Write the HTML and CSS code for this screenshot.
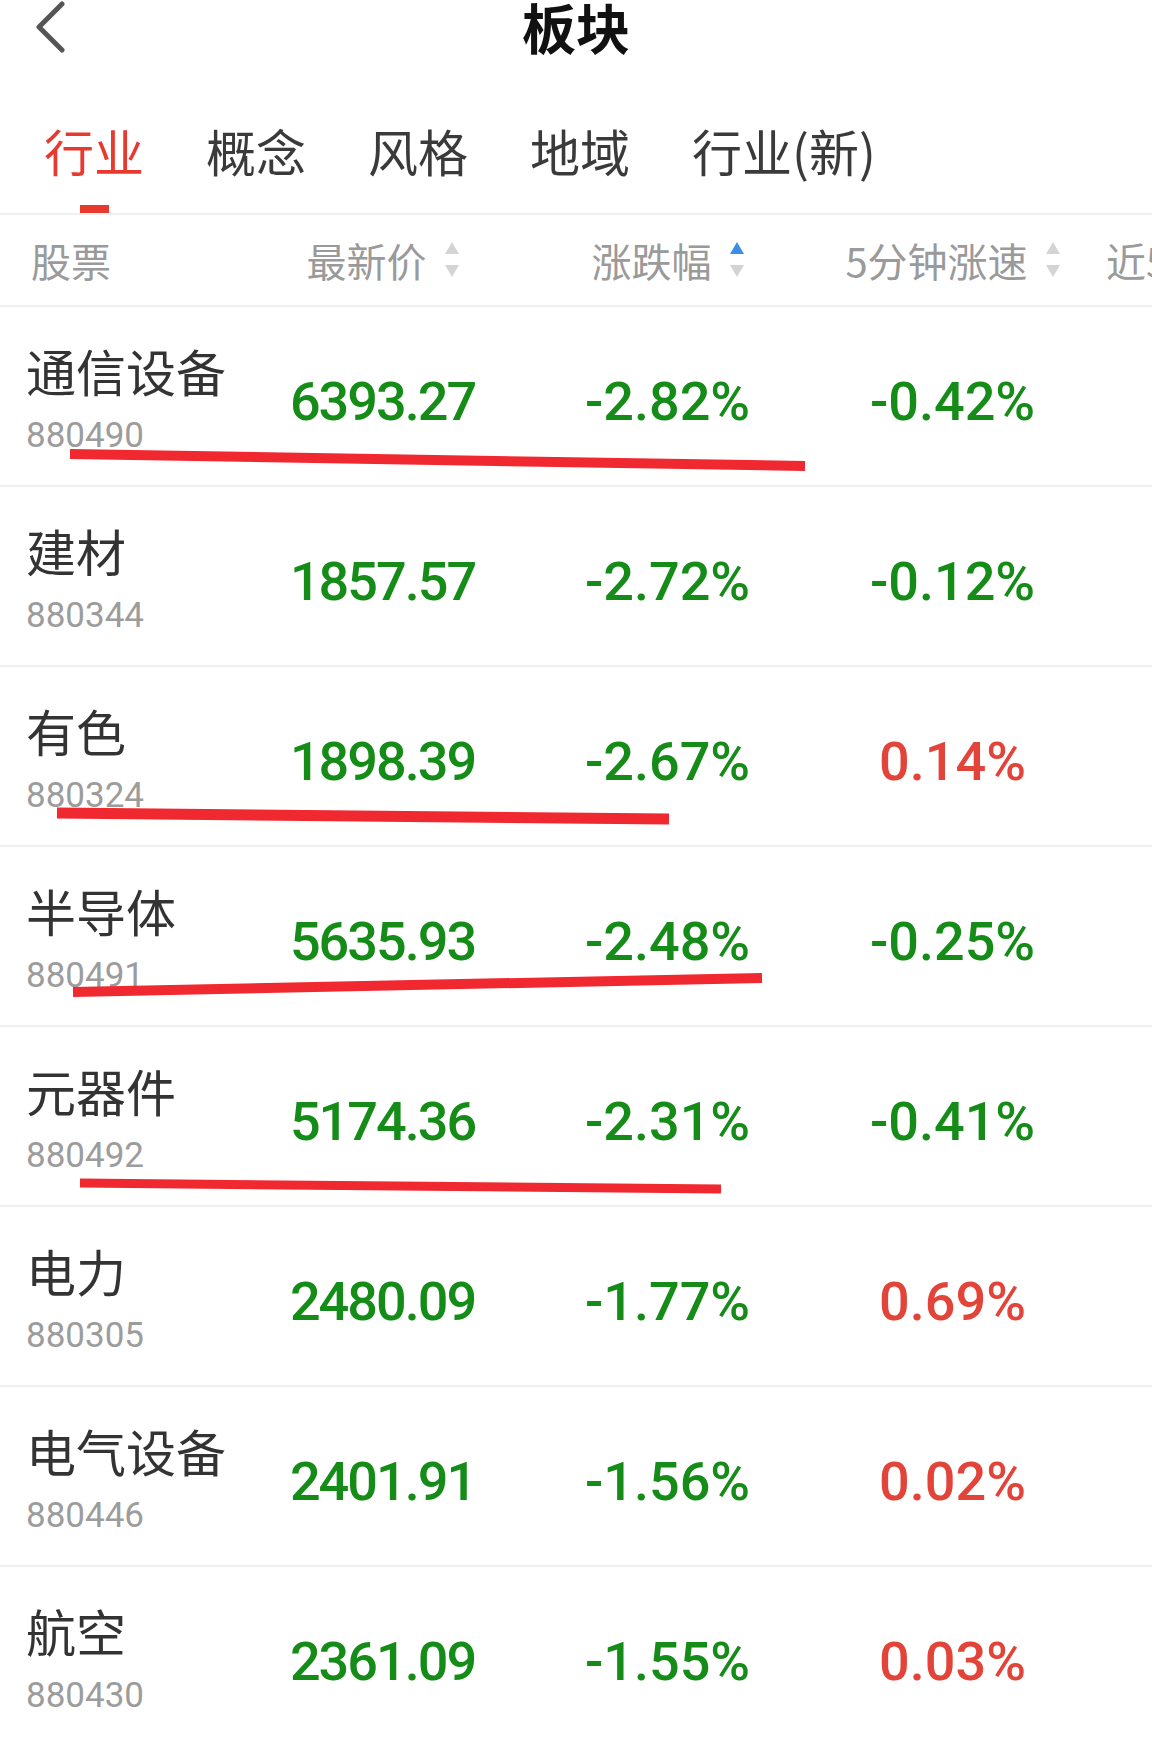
FILE: index.html
```html
<!DOCTYPE html>
<html lang="zh-CN">
<head>
  <meta charset="UTF-8">
  <title>板块</title>
  <link rel="stylesheet" href="styles.css">
</head>
<body>

<div class="page">
  <header class="topbar">
    <a class="back" href="#">
      <svg width="30" height="52" viewBox="0 0 30 52">
        <polyline points="26,3 3,26 26,49" fill="none" stroke="#555" stroke-width="5" stroke-linecap="round" stroke-linejoin="round"/>
      </svg>
    </a>
    <h1>板块</h1>
    <span></span>
  </header>

  <nav class="tabs">
    <div class="tab active"><span>行业</span><i></i></div>
    <div class="tab"><span>概念</span><i></i></div>
    <div class="tab"><span>风格</span><i></i></div>
    <div class="tab"><span>地域</span><i></i></div>
    <div class="tab"><span>行业(新)</span><i></i></div>
  </nav>

  <div class="table">
    <div class="row head">
      <div class="cell name">股票</div>
      <div class="cell"><span>最新价</span><svg class="sort" width="14" height="36" viewBox="0 0 14 36"><polygon points="7,0 14,12 0,12" fill="#d4d4d4"/><polygon points="0,23 14,23 7,35" fill="#d4d4d4"/></svg></div>
      <div class="cell"><span>涨跌幅</span><svg class="sort" width="14" height="36" viewBox="0 0 14 36"><polygon points="7,0 14,12 0,12" fill="#3b8fe3"/><polygon points="0,23 14,23 7,35" fill="#d4d4d4"/></svg></div>
      <div class="cell"><span>5分钟涨速</span><svg class="sort" width="14" height="36" viewBox="0 0 14 36"><polygon points="7,0 14,12 0,12" fill="#d4d4d4"/><polygon points="0,23 14,23 7,35" fill="#d4d4d4"/></svg></div>
      <div class="cell more"><span>近5日</span></div>
    </div>

    <div class="row">
      <div class="cell name"><div class="nm">通信设备</div><div class="code">880490</div></div>
      <div class="cell num price down">6393.27</div>
      <div class="cell num down">-2.82%</div>
      <div class="cell num down">-0.42%</div>
      <div class="cell more"></div>
    </div>
    <div class="row">
      <div class="cell name"><div class="nm">建材</div><div class="code">880344</div></div>
      <div class="cell num price down">1857.57</div>
      <div class="cell num down">-2.72%</div>
      <div class="cell num down">-0.12%</div>
      <div class="cell more"></div>
    </div>
    <div class="row">
      <div class="cell name"><div class="nm">有色</div><div class="code">880324</div></div>
      <div class="cell num price down">1898.39</div>
      <div class="cell num down">-2.67%</div>
      <div class="cell num up">0.14%</div>
      <div class="cell more"></div>
    </div>
    <div class="row">
      <div class="cell name"><div class="nm">半导体</div><div class="code">880491</div></div>
      <div class="cell num price down">5635.93</div>
      <div class="cell num down">-2.48%</div>
      <div class="cell num down">-0.25%</div>
      <div class="cell more"></div>
    </div>
    <div class="row">
      <div class="cell name"><div class="nm">元器件</div><div class="code">880492</div></div>
      <div class="cell num price down">5174.36</div>
      <div class="cell num down">-2.31%</div>
      <div class="cell num down">-0.41%</div>
      <div class="cell more"></div>
    </div>
    <div class="row">
      <div class="cell name"><div class="nm">电力</div><div class="code">880305</div></div>
      <div class="cell num price down">2480.09</div>
      <div class="cell num down">-1.77%</div>
      <div class="cell num up">0.69%</div>
      <div class="cell more"></div>
    </div>
    <div class="row">
      <div class="cell name"><div class="nm">电气设备</div><div class="code">880446</div></div>
      <div class="cell num price down">2401.91</div>
      <div class="cell num down">-1.56%</div>
      <div class="cell num up">0.02%</div>
      <div class="cell more"></div>
    </div>
    <div class="row">
      <div class="cell name"><div class="nm">航空</div><div class="code">880430</div></div>
      <div class="cell num price down">2361.09</div>
      <div class="cell num down">-1.55%</div>
      <div class="cell num up">0.03%</div>
      <div class="cell more"></div>
    </div>
  </div>

  <!-- hand-drawn marks over the list -->
  <svg class="marks" width="1152" height="1740" viewBox="0 0 1152 1740">
    <line x1="70" y1="454" x2="805" y2="466" stroke="#f0282f" stroke-width="10"/>
    <line x1="57" y1="813" x2="669" y2="819" stroke="#f0282f" stroke-width="11"/>
    <line x1="73" y1="992" x2="762" y2="978" stroke="#f0282f" stroke-width="10"/>
    <line x1="80" y1="1183" x2="721" y2="1189" stroke="#f0282f" stroke-width="9"/>
  </svg>
</div>

</body>
</html>
```

FILE: styles.css
```css
* {
  box-sizing: border-box;
}

html, body {
  margin: 0;
  background: #fff;
  font-family: "Noto Sans CJK SC", "Noto Sans", sans-serif;
}

.page {
  position: relative;
  width: 1152px;
  height: 1740px;
  overflow: hidden;
}

.topbar {
  display: grid;
  grid-template-columns: 1fr auto 1fr;
  align-items: start;
  height: 60px;
}

.back {
  display: flex;
  padding-left: 36px;
  padding-top: 1px;
}

.topbar h1 {
  margin: 0;
  font-size: 54px;
  line-height: 54px;
  font-weight: 700;
  color: #111;
}

.tabs {
  display: flex;
  gap: 62px;
  padding-left: 44px;
  border-bottom: 2px solid #efefef;
}

.tab {
  display: flex;
  flex-direction: column;
  align-items: center;
  padding-top: 62px;
}

.tab span {
  font-size: 50px;
  line-height: 56px;
  color: #3a3a3a;
}

.tab i {
  display: block;
  width: 29px;
  height: 8px;
  margin-top: 27px;
  background: transparent;
}

.tab.active span {
  color: #e8392e;
}

.tab.active i {
  background: #e8392e;
}

.row {
  display: flex;
  height: 180px;
  border-bottom: 2px solid #efefef;
}

.row.head {
  height: 92px;
}

.cell {
  flex: 0 0 285px;
  display: flex;
  align-items: center;
  justify-content: center;
}

.cell.name {
  flex: 0 0 240px;
  flex-direction: column;
  align-items: flex-start;
  justify-content: center;
  gap: 18px;
  padding-left: 26px;
  padding-top: 6px;
}

.cell.more {
  flex: 0 0 300px;
  justify-content: flex-start;
  padding-left: 11px;
}

.head .cell {
  font-size: 40px;
  color: #9a9a9a;
  gap: 18px;
}

.head .cell.name {
  padding: 0 0 0 31px;
}

.nm {
  font-size: 50px;
  line-height: 56px;
  color: #333;
}

.code {
  font-family: Roboto, sans-serif;
  font-size: 35px;
  line-height: 40px;
  color: #9c9c9c;
}

.num {
  font-family: Roboto, sans-serif;
  font-size: 54px;
  line-height: 54px;
  font-weight: 500;
  padding-top: 12px;
}

.num.price {
  letter-spacing: -2px;
}

.down {
  color: #168c18;
}

.up {
  color: #e2443a;
}

.marks {
  position: absolute;
  left: 0;
  top: 0;
  pointer-events: none;
}
```
